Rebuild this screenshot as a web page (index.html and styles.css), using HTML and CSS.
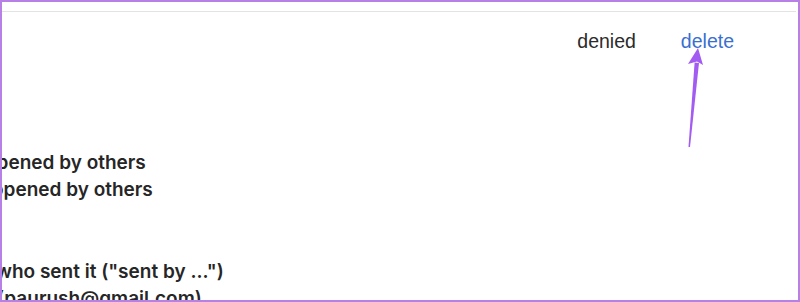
FILE: index.html
```html
<!doctype html>
<html lang="en">
<head>
    <meta charset="UTF-8">
    <title>Sharing settings</title>
    <link rel="stylesheet" href="styles.css">
</head>
<body>
    <div class="frame">
        <div class="topline"></div>
        <div class="actions">
            <span class="denied">denied</span>
            <span class="delete">delete</span>
        </div>
        <div class="rows">
            <p class="row rowA">opened by others</p>
            <p class="row rowB">opened by others</p>
        </div>
        <div class="rows rows2">
            <p class="row rowC">who sent it ("sent by ...")</p>
            <p class="row rowD">(paurush@gmail.com)</p>
        </div>
        <svg class="arrow" width="40" height="110" viewBox="0 0 40 110">
            <path d="M18.5 99 L20 99 L29 15 L24.6 14.6 Z" fill="#a35cf2"/>
            <path d="M28 0 L18 16 L27 13.5 L33 17 Z" fill="#a35cf2"/>
        </svg>
    </div>
</body>
</html>
```

FILE: styles.css
```css
*{
    margin: 0;
    padding: 0;
}
body{
    background: #fff;
}
.frame{
    position: relative;
    width: 800px;height: 302px;box-sizing: border-box;
    border: 2px solid #b780e6;
    overflow: hidden;
    background: #fff;
}
.topline{
    margin-top: 9px;margin-right: 2px;
    height: 1px;background: #e3e3e3;
}
.actions{
    display: flex;justify-content: flex-end;gap: 45px;
    padding-right: 64px;margin-top: 16px;
    font-family: "Liberation Sans", Arial, sans-serif;font-size: 19.5px;line-height: 26px;
}
.denied{
    color: #2b2b2b;
}
.delete{
    color: #3a6fd0;
}
.rows{
    margin-top: 95px;
    font-family: Inter, "Open Sans", sans-serif;font-weight: 600;font-size: 19px;line-height: 27px;
    color: #262626;
    white-space: nowrap;
}
.rows2{
    margin-top: 55px;
}
.rowA{
    margin-left: -17px;
}
.rowB{
    margin-left: -10px;
}
.rowC{
    margin-left: -6px;
}
.rowD{
    margin-left: -5px;
}
.arrow{
    position: absolute;left: 668px;top: 46px;
}
```
